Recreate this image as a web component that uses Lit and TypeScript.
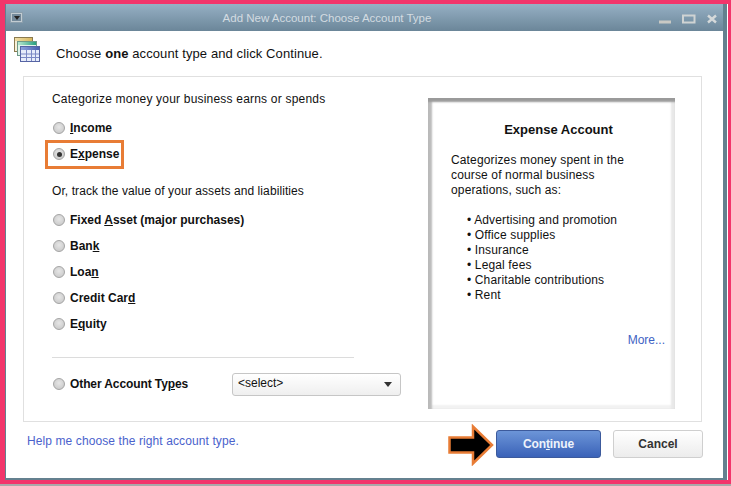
import { LitElement, html, css, svg } from "lit";
import { customElement } from "lit/decorators.js";

const u = (before: string, ch: string, after: string) => html`${before}<u>${ch}</u>${after}`;

@customElement("app-root")
export class AppRoot extends LitElement {
  static styles = css`
    :host { display: block; width: 731px; height: 486px; background: #a9a9a9; font-family: "Liberation Sans", Arial, sans-serif; color: #111; overflow: hidden; }
    .frame { box-sizing: border-box; width: 731px; height: 484px; background: #f2356b; padding: 4px 4px 4px 5px; }
    .win { box-sizing: border-box; height: 100%; background: #fff; border: solid #64808f; border-width: 0 4px 2px 1px; display: flex; flex-direction: column; box-shadow: 1px 0 0 #fff; }
    .title { height: 27px; flex: none; background: linear-gradient(#96b0c4, #6b8699); display: flex; align-items: center; padding: 0 6px 0 5px; color: #d3dbe1; font-size: 11.5px; }
    .menu { width: 9px; height: 7px; border: 1px solid #c2ccd2; background: #73899a; display: flex; align-items: center; justify-content: center; box-shadow: 0 0 0 1px #8a9eac; }
    .menu i { width: 0; height: 0; border: 3px solid transparent; border-top: 4px solid #222; border-bottom: 0; }
    .tt { flex: 1; text-align: center; padding-right: 27px; }
    .ctl { display: flex; align-items: center; gap: 11px; }
    .ctl svg { display: block; }
    .head { height: 45px; flex: none; display: flex; align-items: center; padding: 0 0 0 7px; font-size: 13px; letter-spacing: .1px; }
    .head svg { margin-right: 15px; margin-top: -8px; }
    .head span { margin-top: -1px; }
    .panel { box-sizing: border-box; height: 346px; flex: none; margin: 0 21px 0 17px; border: 1px solid #e0e0e0; padding: 15px 0 0 28px; display: flex; gap: 27px; }
    .left { width: 349px; flex: none; font-size: 12px; }
    .cap { height: 14px; line-height: 14px; letter-spacing: .2px; }
    .radios { display: flex; flex-direction: column; }
    .radios.a { margin-top: 9px; }
    .radios.b { margin-top: 9px; }
    .row { position: relative; display: flex; align-items: center; height: 26px; font-weight: bold; gap: 5px; width: max-content; }
    .dot { box-sizing: border-box; width: 12px; height: 12px; border-radius: 50%; border: 1px solid #a4a4a4; background: radial-gradient(circle at 50% 40%, #e6e6e6, #c4c4c4); display: flex; align-items: center; justify-content: center; margin-left: 1px; }
    .dot.on::after { content: ""; width: 5px; height: 5px; border-radius: 50%; background: #333; }
    .mark { position: absolute; left: -7px; top: -1px; width: 73px; height: 23px; border: 3px solid #e87c35; }
    .cap2 { margin-top: 17px; letter-spacing: .09px; }
    hr { border: 0; height: 1px; background: #dcdcdc; margin: 20px 0 0 0; width: 302px; }
    .other { display: flex; align-items: center; margin-top: 14px; width: 349px; justify-content: space-between; font-weight: bold; }
    .other .row { height: 24px; letter-spacing: -.1px; }
    .sel { box-sizing: border-box; width: 169px; height: 23px; border: 1px solid #c6c6c6; border-radius: 3px; background: linear-gradient(#fff, #efefef); display: flex; align-items: center; justify-content: space-between; padding: 0 8px 2px 5px; font-weight: normal; font-size: 12px; letter-spacing: 0; }
    .sel i { width: 0; height: 0; border: 4px solid transparent; border-top: 5px solid #333; border-bottom: 0; margin-top: 2px; }
    .info { box-sizing: border-box; width: 247px; height: 311px; margin-top: 6px; padding: 24px 10px 0 23px; background: #fff; font-size: 12px; display: flex; flex-direction: column;
      box-shadow: inset 0 5px 2px -1px #9a9a9a, inset 5px 0 2px -1px #bbbbbb, inset -5px 0 2px -1px #e8e8e8, inset 0 -5px 2px -1px #f2f2f2; }
    .info h3 { margin: 0; font-size: 13px; line-height: 15px; text-align: center; padding-left: 6px; padding-right: 5px; }
    .info p { margin: 16px 0 0; line-height: 15px; letter-spacing: .14px; }
    .info ul { list-style: none; margin: 15px 0 0; padding: 0 0 0 16px; line-height: 15px; letter-spacing: .14px; }
    .more { color: #3e62c4; margin-top: 30px; align-self: flex-end; line-height: 15px; }
    .foot { flex: 1; display: flex; align-items: flex-start; padding: 8px 20px 0 21px; font-size: 12px; }
    .help { color: #4a62cc; flex: 1; line-height: 15px; margin-top: 4px; letter-spacing: .1px; }
    .btn { box-sizing: border-box; height: 28px; border-radius: 3px; display: flex; align-items: center; justify-content: center; font-size: 12px; font-weight: bold; }
    .go { position: relative; width: 105px; background: linear-gradient(#6c95d8, #3a62b8); border: 1px solid #3c5a9c; color: #eef3fb; margin-right: 12px; letter-spacing: -.1px; }
    .no { width: 90px; background: linear-gradient(#fff, #ececec); border: 1px solid #cfcfcf; color: #333; }
    .arrow { position: absolute; left: -49px; top: -7px; }
  `;

  radio(label: unknown, on = false, mark = false) {
    return html`<div class="row"><span class="dot ${on ? "on" : ""}"></span><span>${label}</span>${mark ? html`<span class="mark"></span>` : ""}</div>`;
  }

  render() {
    return html`<div class="frame"><div class="win">
      <div class="title">
        <div class="menu"><i></i></div>
        <div class="tt">Add New Account: Choose Account Type</div>
        <div class="ctl">
          <svg width="12" height="12" viewBox="0 0 12 12"><rect x="0" y="8.500" width="12" height="3" fill="#c9c9c4"/></svg>
          <svg width="14" height="12" viewBox="0 0 14 12"><rect x="1" y="3.500" width="11.500" height="7" fill="none" stroke="#cfd3d3" stroke-width="2"/></svg>
          <svg width="10" height="12" viewBox="0 0 10 12"><path d="M1 3.500l8 7M9 3.500l-8 7" stroke="#d5d9da" stroke-width="2.400" fill="none"/></svg>
        </div>
      </div>
      <div class="head">
        <svg width="28" height="28" viewBox="0 0 28 28">
          <defs>
            <linearGradient id="g1" x1="0" y1="0" x2="1" y2="0"><stop offset="0" stop-color="#f0dfa8"/><stop offset="1" stop-color="#d8b860"/></linearGradient>
            <linearGradient id="g2" x1="0" y1="0" x2="1" y2="0"><stop offset="0" stop-color="#b8e8d0"/><stop offset="1" stop-color="#28a080"/></linearGradient>
            <linearGradient id="g3" x1="0" y1="0" x2="1" y2="0"><stop offset="0" stop-color="#8aa0dc"/><stop offset="1" stop-color="#4a60b0"/></linearGradient>
          </defs>
          <rect x="1.500" y="1.500" width="18" height="14" fill="#f8f0d8" stroke="#8a7a50"/>
          <rect x="2" y="2" width="17" height="3" fill="url(#g1)"/>
          <rect x="4.500" y="5.500" width="19" height="14" fill="#e0f4ea" stroke="#6f9a88"/>
          <rect x="5" y="6" width="18" height="3" fill="url(#g2)"/>
          <rect x="7.500" y="10.500" width="19" height="15" fill="#e6ecfa" stroke="#5664a4"/>
          <rect x="8" y="11" width="18" height="3" fill="url(#g3)"/>
          ${svg`<path d="M13.500 14v11M18.500 14v11M22.500 14v11M8 18h18M8 21.500h18" stroke="#7a88c4" fill="none"/>`}
        </svg>
        <span>Choose <b>one</b> account type and click Continue.</span>
      </div>
      <div class="panel">
        <div class="left">
          <div class="cap">Categorize money your business earns or spends</div>
          <div class="radios a">
            ${this.radio(u("", "I", "ncome"))}
            ${this.radio(u("E", "x", "pense"), true, true)}
          </div>
          <div class="cap cap2">Or, track the value of your assets and liabilities</div>
          <div class="radios b">
            ${this.radio(u("Fixed ", "A", "sset (major purchases)"))}
            ${this.radio(u("Ban", "k", ""))}
            ${this.radio(u("Loa", "n", ""))}
            ${this.radio(u("Credit Car", "d", ""))}
            ${this.radio(u("E", "q", "uity"))}
          </div>
          <hr />
          <div class="other">
            ${this.radio(u("Other Account Ty", "p", "es"))}
            <div class="sel"><span>&lt;select&gt;</span><i></i></div>
          </div>
        </div>
        <div class="info">
          <h3>Expense Account</h3>
          <p>Categorizes money spent in the<br />course of normal business<br />operations, such as:</p>
          <ul>
            <li>• Advertising and promotion</li>
            <li>• Office supplies</li>
            <li>• Insurance</li>
            <li>• Legal fees</li>
            <li>• Charitable contributions</li>
            <li>• Rent</li>
          </ul>
          <div class="more">More...</div>
        </div>
      </div>
      <div class="foot">
        <div class="help">Help me choose the right account type.</div>
        <div class="btn go">
          <svg class="arrow" width="46" height="42" viewBox="0 0 46 42"><path d="M1.500 13.500H25V2.500L44 21 25 39.500V28.500H1.500Z" fill="#000" stroke="#e87c35" stroke-width="2.500"/></svg>
          <span>Con<u>t</u>inue</span>
        </div>
        <div class="btn no">Cancel</div>
      </div>
    </div></div>`;
  }
}
